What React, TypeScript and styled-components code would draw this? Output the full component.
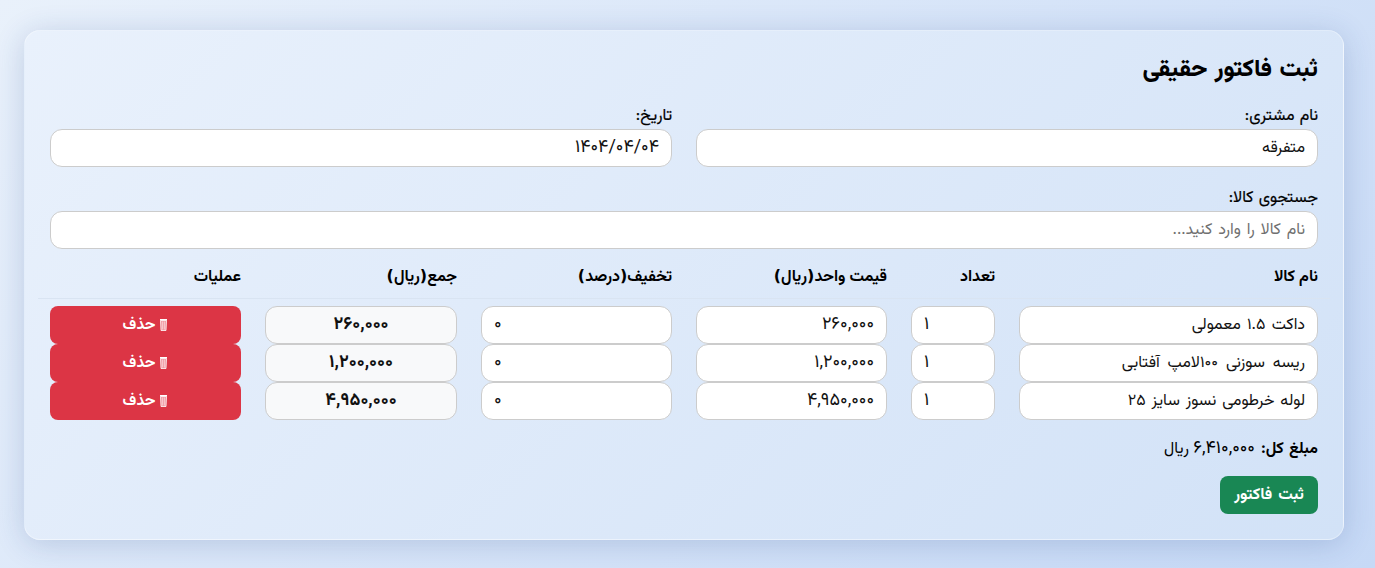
import React from "react";
import styled, { createGlobalStyle } from "styled-components";

const FONT = `"Vazirmatn", "DejaVu Sans", sans-serif`;

const Global = createGlobalStyle`
  * { box-sizing: border-box; }
  html, body { margin: 0; height: 100%; }
  body {
    min-height: 568px;
    overflow: hidden;
    background: linear-gradient(135deg, #e9f1fb 0%, #c6d9f6 100%);
    font-family: ${FONT};
    color: #000;
  }
`;

const Page = styled.main`
  padding: 30px 31px 28px 24px;
`;

const Card = styled.section`
  height: 510px;
  padding: 19px 25px 25px;
  border: 1px solid rgba(255, 255, 255, 0.35);
  border-radius: 16px;
  background: linear-gradient(135deg, #e9f1fc 0%, #d2e2f7 100%);
  box-shadow: 0 4px 30px rgba(31, 66, 135, 0.2);
`;

const Title = styled.h2`
  margin: 0 0 17px;
  height: 36px;
  line-height: 40px;
  font-size: 24px;
  font-weight: 800;
  word-spacing: 1.5px;
`;

const FormRow = styled.div`
  display: grid;
  grid-template-columns: 622px 622px;
  gap: 24px;
  margin-bottom: 18px;
`;

const Field = styled.label`
  display: block;
  margin-bottom: 10px;
`;

const Plain = styled.label`
  display: block;
`;

const LabelText = styled.span`
  display: block;
  height: 26px;
  line-height: 28px;
  font-size: 16px;
  font-weight: 400;
  word-spacing: 1px;
  -webkit-text-stroke: 0.2px #000;
`;

const Input = styled.input<{ $align?: string; $bg?: string; $gap?: number }>`
  display: block;
  width: 100%;
  height: 38px;
  padding: 0 12px;
  border: 1px solid #ccc;
  border-radius: 12px;
  outline: none;
  background: ${(p) => p.$bg || "#fff"};
  color: #111;
  font: 400 16px ${FONT};
  word-spacing: ${(p) => p.$gap ?? 1.5}px;
  text-align: ${(p) => p.$align || "right"};
  &::placeholder { color: #707070; }
`;

const NumberInput = styled(Input)`
  font-size: 18px;
`;

const SumInput = styled(NumberInput)`
  font-weight: 700;
`;

const Table = styled.table`
  width: 1292px;
  margin: 0 -12px;
  border-collapse: collapse;
  table-layout: fixed;
`;

const Col = styled.col<{ $w: number }>`
  width: ${(p) => p.$w}px;
`;

const Th = styled.th`
  height: 39px;
  padding: 0 12px 2px;
  border-bottom: 1px solid #d9e4f2;
  font-size: 16px;
  font-weight: 700;
  text-align: right;
`;

const Paren = styled.span`
  font-family: "DejaVu Sans", sans-serif;
`;

const Td = styled.td`
  height: 38px;
  padding: 0 12px;
`;

const HeadSpacer = styled.tr`
  height: 8px;
`;

const DeleteButton = styled.button`
  display: flex;
  align-items: center;
  justify-content: center;
  gap: 4px;
  width: 100%;
  height: 38px;
  padding: 0;
  border: 0;
  border-radius: 8px;
  background: #dc3545;
  color: #fff;
  font: 700 15.6px ${FONT};
`;

const BinIcon = styled.svg`
  display: block;
  margin-bottom: 1px;
`;

const Total = styled.p`
  margin: 18px 0 16px;
  height: 22px;
  line-height: 22px;
  font-size: 16px;
`;

const TotalLabel = styled.strong`
  word-spacing: 1px;
  margin-left: 6px;
`;

const TotalValue = styled.span`
  font-size: 18px;
`;

const Submit = styled.button`
  display: block;
  height: 38px;
  width: 98px;
  padding: 0;
  border: 0;
  border-radius: 8px;
  background: #198754;
  color: #fff;
  font: 700 16px ${FONT};
  word-spacing: 2px;
`;

const Bin = () => (
  <BinIcon width="9" height="13" viewBox="0 0 9 13" aria-hidden="true">
    <path d="M1 1h7v1.5H1z" fill="#fff" />
    <path d="M1.5 2.5h6l-.5 10H2z" fill="#f19aa4" stroke="#fff" strokeWidth="0.8" />
    <path d="M3.6 3.5v8M5.4 3.5v8" stroke="#fbdfe2" strokeWidth="0.7" />
  </BinIcon>
);

const rows = [
  { name: "داکت ۱.۵ معمولی", price: "۲۶۰,۰۰۰", gap: 2 },
  { name: "ریسه سوزنی ۱۰۰لامپ آفتابی", price: "۱,۲۰۰,۰۰۰", gap: 3.5 },
  { name: "لوله خرطومی نسوز سایز ۲۵", price: "۴,۹۵۰,۰۰۰", gap: 1.5 },
];

export default function App() {
  return (
    <Page dir="rtl">
      <Global />
      <Card>
        <Title>ثبت فاکتور حقیقی</Title>
        <FormRow>
          <Plain>
            <LabelText>نام مشتری:</LabelText>
            <Input defaultValue="متفرقه" />
          </Plain>
          <Plain>
            <LabelText>تاریخ:</LabelText>
            <NumberInput defaultValue="۱۴۰۴/۰۴/۰۴" />
          </Plain>
        </FormRow>
        <Field>
          <LabelText>جستجوی کالا:</LabelText>
          <Input placeholder="نام کالا را وارد کنید..." />
        </Field>
        <Table>
          <colgroup>
            <Col $w={323} />
            <Col $w={108} />
            <Col $w={215} />
            <Col $w={215} />
            <Col $w={216} />
            <Col $w={215} />
          </colgroup>
          <thead>
            <tr>
              <Th>نام کالا</Th>
              <Th>تعداد</Th>
              <Th>قیمت واحد<Paren>(</Paren>ریال<Paren>)</Paren></Th>
              <Th>تخفیف<Paren>(</Paren>درصد<Paren>)</Paren></Th>
              <Th>جمع<Paren>(</Paren>ریال<Paren>)</Paren></Th>
              <Th>عملیات</Th>
            </tr>
            <HeadSpacer />
          </thead>
          <tbody>
            {rows.map((r) => (
              <tr key={r.name}>
                <Td><Input defaultValue={r.name} $gap={r.gap} /></Td>
                <Td><NumberInput defaultValue="۱" $align="left" /></Td>
                <Td><NumberInput defaultValue={r.price} /></Td>
                <Td><NumberInput defaultValue="۰" $align="left" /></Td>
                <Td><SumInput readOnly defaultValue={r.price} $align="center" $bg="#f8f9fa" /></Td>
                <Td>
                  <DeleteButton type="button"><Bin />حذف</DeleteButton>
                </Td>
              </tr>
            ))}
          </tbody>
        </Table>
        <Total><TotalLabel>مبلغ کل:</TotalLabel><TotalValue>۶,۴۱۰,۰۰۰</TotalValue> ریال</Total>
        <Submit type="button">ثبت فاکتور</Submit>
      </Card>
    </Page>
  );
}
